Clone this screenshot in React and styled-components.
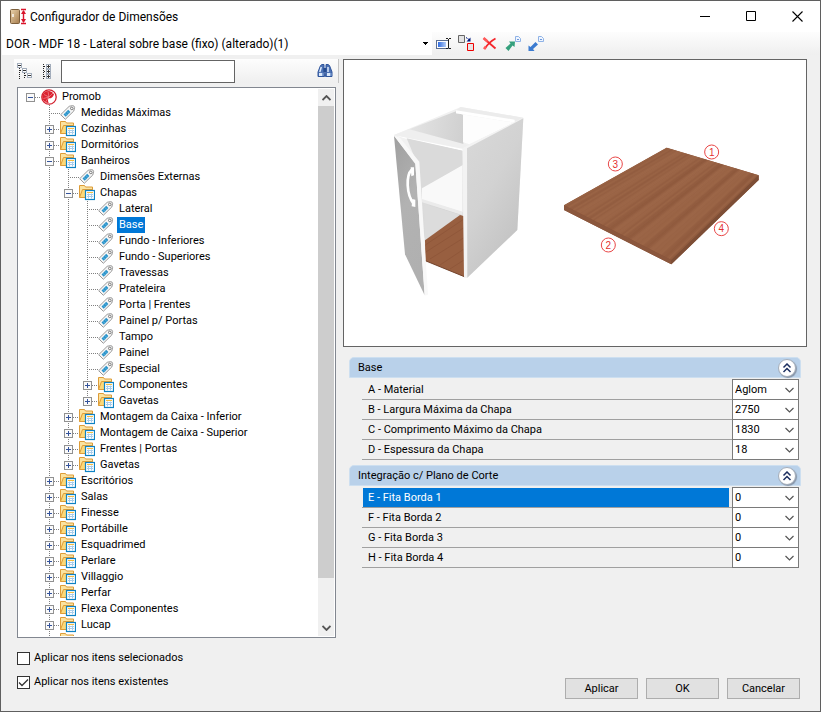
import React, { Fragment, useState } from "react";
import styled, { createGlobalStyle } from "styled-components";

const leaf = (name) => ({ name, type: "tag" });
const folder = (name, children = [], open = false) => ({
  name,
  type: "folder",
  children,
  open,
});

const TREE = {
  name: "Promob",
  type: "root",
  open: true,
  children: [
    leaf("Medidas Máximas"),
    folder("Cozinhas"),
    folder("Dormitórios"),
    folder(
      "Banheiros",
      [
        leaf("Dimensões Externas"),
        folder(
          "Chapas",
          [
            leaf("Lateral"),
            leaf("Base"),
            leaf("Fundo - Inferiores"),
            leaf("Fundo - Superiores"),
            leaf("Travessas"),
            leaf("Prateleira"),
            leaf("Porta | Frentes"),
            leaf("Painel p/ Portas"),
            leaf("Tampo"),
            leaf("Painel"),
            leaf("Especial"),
            folder("Componentes"),
            folder("Gavetas"),
          ],
          true
        ),
        folder("Montagem da Caixa - Inferior"),
        folder("Montagem de Caixa - Superior"),
        folder("Frentes | Portas"),
        folder("Gavetas"),
      ],
      true
    ),
    folder("Escritórios"),
    folder("Salas"),
    folder("Finesse"),
    folder("Portábille"),
    folder("Esquadrimed"),
    folder("Perlare"),
    folder("Villaggio"),
    folder("Perfar"),
    folder("Flexa Componentes"),
    folder("Lucap"),
    folder(""),
  ],
};

const GROUPS = [
  {
    title: "Base",
    fields: [
      { name: "A - Material", value: "Aglom" },
      { name: "B - Largura Máxima da Chapa", value: "2750" },
      { name: "C - Comprimento Máximo da Chapa", value: "1830" },
      { name: "D - Espessura da Chapa", value: "18" },
    ],
  },
  {
    title: "Integração c/ Plano de Corte",
    fields: [
      { name: "E - Fita Borda 1", value: "0" },
      { name: "F - Fita Borda 2", value: "0" },
      { name: "G - Fita Borda 3", value: "0" },
      { name: "H - Fita Borda 4", value: "0" },
    ],
  },
];

// icons
const AppIcon = () => (
  <svg width="18" height="18" viewBox="0 0 18 18">
    <defs>
      <linearGradient id="door" x1="0" y1="0" x2="1" y2="1">
        <stop offset="0" stopColor="#ead3ac" />
        <stop offset="1" stopColor="#a67c4d" />
      </linearGradient>
    </defs>
    <rect x="1.5" y="1.500" width="9" height="14" rx="1" fill="url(#door)" stroke="#7d5f3c" />
    <path d="M4 6v3" stroke="#fff" strokeWidth="1.400" />
    <path d="M12 1.500h5M12 15.500h5M14.500 3v11" stroke="#d9152c" strokeWidth="1.400" />
    <path d="M14.500 2l2.500 4h-5zM14.500 15l2.500-4h-5z" fill="#d9152c" />
  </svg>
);

const RootIcon = () => (
  <svg width="16" height="16" viewBox="0 0 16 16">
    <circle cx="8" cy="8" r="7.200" fill="#fff" stroke="#d2202e" strokeWidth="1.300" />
    <path
      d="M8.200 2a6 6 0 1 0 -0.500 11.900C6.800 12.400 6.800 10.600 7.600 9.200C9.500 9.600 11.800 8.800 13 5.200A6 6 0 0 0 8.200 2z"
      fill="#dc2230"
    />
    <path
      d="M8 8L3 5.500M8 8L2.500 9.500M7.500 8.500L4.500 13M8 8L7 2.500M8 8L12 4"
      stroke="#f3a0a6"
      strokeWidth="0.600"
    />
  </svg>
);

const FolderIcon = () => (
  <svg width="16" height="16" viewBox="0 0 16 16">
    <path d="M0.500 12.500v-12h5l1 1.500h7v3" fill="#fbe3a0" stroke="#dd9c38" />
    <path d="M0.500 12.500l3-8h10v8z" fill="#fcd978" stroke="#dd9c38" />
    <rect x="6.500" y="5.500" width="9" height="9" fill="#fff" stroke="#0f83c4" strokeWidth="1.200" />
    <path d="M8 7.500h6" stroke="#f5bd3f" />
    <path d="M8 9.500h6M8 11.500h6M9.500 8.500v5M12.500 8.500v5" stroke="#a9cdea" />
  </svg>
);

const TagIcon = () => (
  <svg width="16" height="16" viewBox="0 0 16 16">
    <path
      d="M0.700 9.700L9.200 1.300L12.600 0.600Q14.600 0.800 14.600 2.600L13.800 6L5.300 14.300Z"
      fill="#f6f6f6"
      stroke="#999"
    />
    <path d="M3.500 9.500L8.200 4.800L10.400 7L5.700 11.700Z" fill="#2a93ca" />
    <path d="M4.800 8.200L7 10.400M6.700 6.300L8.900 8.500" stroke="#7dc3e6" strokeWidth="0.700" />
    <circle cx="11.800" cy="3.400" r="1.300" fill="#fff" stroke="#777" />
  </svg>
);

const CollapseAllIcon = () => (
  <svg width="17" height="17" viewBox="0 0 17 17" shapeRendering="crispEdges">
    <path d="M2.500 5v11M7.500 10v6M3 7.500h3M8 12.500h3" fill="none" stroke="#222" strokeDasharray="1 1" />
    <path d="M0.500 0.500h4v4h-4zM5.500 5.500h4v4h-4zM10.500 10.500h4v4h-4z" fill="#fff" stroke="#a3adbb" />
    <path d="M1 2.500h3M6 7.500h3M11 12.500h3" stroke="#333" />
  </svg>
);

const ExpandAllIcon = () => (
  <svg width="9" height="17" viewBox="0 0 9 17" shapeRendering="crispEdges">
    <path d="M0.500 1v15M1 3.500h3M1 8.500h3M1 13.500h3" fill="none" stroke="#222" strokeDasharray="1 1" />
    <path d="M3.500 1.500h4v4h-4zM3.500 6.500h4v4h-4zM3.500 11.500h4v4h-4z" fill="#fff" stroke="#a3adbb" />
    <path d="M4 3.500h3M5.500 2v3M4 8.500h3M5.500 7v3M4 13.500h3M5.500 12v3" stroke="#333" />
  </svg>
);

const BinocularsIcon = () => (
  <svg width="16" height="16" viewBox="0 0 16 16">
    <path
      d="M3.500 2.500l1.500-1h2v4l.5 8h-6.500v-4.500zM12.500 2.500l-1.500-1h-2v4l-.5 8h6.500v-4.500z"
      fill="#4e73b5"
      stroke="#2f559c"
    />
    <path d="M6.500 5h3v4h-3z" fill="#274c90" />
    <path d="M4.300 4L2.800 9M11 4v5" stroke="#dce9fb" strokeWidth="1.500" />
    <path d="M2 10h3v3H2zM10 10h3v3h-3z" fill="#dbe8fa" />
    <path d="M5 10h1.500v3H5zM13 10h1.500v3H13z" fill="#7f9fd2" />
  </svg>
);

const RenameIcon = () => (
  <svg width="16" height="16" viewBox="0 0 16 16">
    <defs>
      <linearGradient id="field">
        <stop offset="0" stopColor="#2f6be0" />
        <stop offset="1" stopColor="#b5cff9" />
      </linearGradient>
    </defs>
    <rect x="0.500" y="4.500" width="12" height="8" fill="#fff" stroke="#5c6f91" />
    <rect x="2" y="6" width="8" height="5" fill="url(#field)" />
    <path d="M10 2.500h2M13 2.500h2M12.500 3v9M10 12.500h2M13 12.500h2" stroke="#222" />
  </svg>
);

const ReplaceIcon = () => (
  <svg width="17" height="17" viewBox="0 0 17 17">
    <path d="M0.500 0.500h6v7h-6z" fill="#e4e4e4" stroke="#666" />
    <path d="M9.500 8.500h6v7h-6z" fill="#e9e4e4" stroke="#e00" />
    <path d="M8 2.500l3 2" stroke="#001a80" strokeDasharray="1.500 0.500" />
    <path d="M12.500 2.500v4H8.500z" fill="#001a80" />
  </svg>
);

const DeleteIcon = () => (
  <svg width="16" height="16" viewBox="0 0 16 16">
    <path d="M2 2.500L13.500 12.500" fill="none" stroke="#f4262b" strokeWidth="1.800" />
    <path d="M13.500 2.500C9 5 5 9 2.500 13" fill="none" stroke="#f4262b" strokeWidth="1.800" />
    <path d="M1.500 2l4 3.500M2 13l2-2.500" stroke="#ff5a5a" strokeWidth="2.600" />
  </svg>
);

const TransferIcon = ({ color, down }) => (
  <svg width="16" height="16" viewBox="0 0 16 16">
    <path d="M10.500 0.500h3l2 2v3h-5z" fill="#eef5ff" stroke="#8fb2e6" />
    <path d="M12 3.500h2" stroke="#6f98d8" />
    {down ? (
      <path d="M0.500 15L0.500 9.500L2.500 11L7.500 6L10 8.500L5 13L6.500 15Z" fill={color} />
    ) : (
      <path d="M10 5.500L9.500 11L7.500 9.500L3.500 15L0.500 12L5.500 7.500L4 5.500Z" fill={color} />
    )}
  </svg>
);

const Chevron = ({ up, bold }) => (
  <svg width="9" height="6" viewBox="0 0 9 6">
    <path
      d={up ? "M0.500 5L4.500 1L8.500 5" : "M0.500 1L4.500 5L8.500 1"}
      fill="none"
      stroke="#555"
      strokeWidth={bold ? 1.8 : 1.2}
    />
  </svg>
);

// wood grain runs along the long edges of the board
const lerp = (a, b, t) => [a[0] + (b[0] - a[0]) * t, a[1] + (b[1] - a[1]) * t];
const GRAIN = Array.from({ length: 64 }, (_, i) => {
  const t = (i + 0.5) / 64;
  return {
    from: lerp([42, 226], [364, 390], t),
    to: lerp([350, 53], [626, 136], t),
    dark: Math.sin(i * 0.55) + Math.sin(i * 2.3) > 0,
    opacity: 0.04 + ((i * 37) % 11) / 90,
  };
});
const MARKS = [
  { text: "1", x: 485, y: 66 },
  { text: "2", x: 175, y: 345 },
  { text: "3", x: 196, y: 102 },
  { text: "4", x: 514, y: 296 },
];

const Cabinet = () => (
  <g transform="translate(36 35) scale(0.33333)">
    <defs>
      <linearGradient id="side" x1="0" y1="0" x2="0.6" y2="1">
        <stop offset="0" stopColor="#d9d9d9" />
        <stop offset="0.5" stopColor="#d2d2d2" />
        <stop offset="1" stopColor="#c2c2c2" />
      </linearGradient>
      <linearGradient id="front" x1="0" y1="0" x2="0.3" y2="1">
        <stop offset="0" stopColor="#9f9f9f" />
        <stop offset="0.5" stopColor="#b2b2b2" />
        <stop offset="1" stopColor="#b0b0b0" />
      </linearGradient>
      <linearGradient id="inner" x1="0" y1="0" x2="1" y2="0.3">
        <stop offset="0" stopColor="#e6e6e6" />
        <stop offset="1" stopColor="#cfcfcf" />
      </linearGradient>
    </defs>
    <path d="M42 120L242 36L430 68L412 405L260 549L134 500Z" fill="#f1f1f1" />
    <path d="M80 106L230 48L250 60V360L130 430L110 190Z" fill="url(#inner)" />
    <path d="M249 57L404 82L268 148L249 142Z" fill="#fdfdfd" />
    <path d="M242 36L430 68L404 83L228 55V46Z" fill="#ececec" />
    <path d="M228 46L404 74V83L228 55Z" fill="#fff" />
    <path d="M42 120L88 103L262 150L250 168L60 124Z" fill="#efefef" />
    <path d="M50 122L250 162V168L78 131Z" fill="#fff" />
    <path d="M80 130L248 167V210L125 278L105 190Z" fill="#dadada" />
    <path d="M126 280L248 210V352L126 314Z" fill="#f9f9f9" />
    <path d="M126 312L248 350V361L126 322Z" fill="#ebebeb" />
    <path d="M132 326L246 361L134 440Z" fill="#dcdcdc" />
    <path d="M135 436L240 360L253 364V545L136 497Z" fill="#985f40" />
    <path
      d="M136 450L252 372M136 472L252 398M150 492L252 428M180 510L252 462M210 522L252 495"
      stroke="#7d452c"
      strokeWidth="3"
      opacity="0.3"
    />
    <path d="M136 497L253 545" stroke="#75442c" strokeWidth="3" />
    <path d="M247 160L430 68L425 78L262 165V549L252 545Z" fill="#f3f3f3" />
    <path d="M261 160L430 70L412 405L262 548Z" fill="url(#side)" />
    <path d="M42 122L106 205L134 601L75 478Z" fill="url(#front)" />
    <path d="M42 122L60 128L118 200L144 599L134 602L106 207Z" fill="#f8f8f8" />
    <path d="M95 224C78 240 78 298 102 328" fill="none" stroke="#fff" strokeWidth="8" />
    <path d="M92 217h10v24l-8 3zM97 312l9 2v22l-11-2z" fill="#fff" />
  </g>
);

const Board = () => (
  <g transform="translate(206 70) scale(0.33333)">
    <path d="M42 226L350 53L626 136V150L364 403L42 240Z" fill="#8a5338" />
    <path d="M42 226L350 53L626 136L364 390Z" fill="#986244" />
    {GRAIN.map((line, index) => (
      <path
        key={index}
        d={`M${line.from.join(" ")}L${line.to.join(" ")}`}
        stroke={line.dark ? "#6f3d26" : "#b07a58"}
        strokeWidth="6"
        opacity={line.opacity}
      />
    ))}
    <path d="M42 226L364 390V403L42 240Z" fill="#8b573d" />
    <path d="M364 390L626 136V150L364 403Z" fill="#7d4e36" />
    {MARKS.map((mark) => (
      <g key={mark.text}>
        <circle cx={mark.x} cy={mark.y} r="21" fill="#fff" stroke="#e84545" strokeWidth="3" />
        <MarkText x={mark.x} y={mark.y + 11}>
          {mark.text}
        </MarkText>
      </g>
    ))}
  </g>
);

const ICONS = { root: RootIcon, folder: FolderIcon, tag: TagIcon };

const TreeNode = ({ node, selected, onSelect }) => {
  const [open, setOpen] = useState(Boolean(node.open));
  const Icon = ICONS[node.type];
  return (
    <TreeItem>
      <TreeRow>
        {node.children ? (
          <Toggle type="button" onClick={() => setOpen(!open)}>
            <svg width="9" height="9" viewBox="0 0 9 9" shapeRendering="crispEdges">
              <rect x="0.500" y="0.500" width="8" height="8" fill="#fafafa" stroke="#919191" />
              <path d={open ? "M2 4.500h5" : "M2 4.500h5M4.500 2v5"} stroke="#34539b" />
            </svg>
          </Toggle>
        ) : (
          <NoToggle />
        )}
        <Branch $wide={!node.children} />
        <Icon />
        {node.name && (
          <TreeLabel type="button" $selected={selected === node.name} onClick={() => onSelect(node.name)}>
            {node.name}
          </TreeLabel>
        )}
      </TreeRow>
      {open && node.children && (
        <TreeList $nested>
          {node.children.map((child, index) => (
            <TreeNode key={index} node={child} selected={selected} onSelect={onSelect} />
          ))}
        </TreeList>
      )}
    </TreeItem>
  );
};

const FieldGroup = ({ group, current, onFocus }) => (
  <Fragment>
    <GroupHeader>
      <GroupTitle>{group.title}</GroupTitle>
      <GroupButton type="button" aria-label={group.title}>
        <svg width="10" height="10" viewBox="0 0 10 10">
          <path d="M1.500 4.500L5 1L8.500 4.500M1.500 9L5 5.500L8.500 9" fill="none" stroke="#1d2f60" strokeWidth="1.500" />
        </svg>
      </GroupButton>
    </GroupHeader>
    <FieldList>
      {group.fields.map((field) => (
        <Field key={field.name}>
          <FieldLabel htmlFor={field.name[0]} $current={current === field.name}>
            {field.name}
          </FieldLabel>
          <SelectBox>
            <FieldSelect id={field.name[0]} onFocus={() => onFocus(field.name)}>
              <option>{field.value}</option>
            </FieldSelect>
            <Chevron />
          </SelectBox>
        </Field>
      ))}
    </FieldList>
  </Fragment>
);

const App = () => {
  const [selected, setSelected] = useState("Base");
  const [current, setCurrent] = useState("E - Fita Borda 1");
  return (
    <Window>
      <GlobalStyle />
      <TitleBar>
        <AppIcon />
        <Title>Configurador de Dimensões</Title>
        <WindowButton type="button" aria-label="Minimizar">
          <svg width="11" height="11" viewBox="0 0 11 11">
            <path d="M0 5.500h10" stroke="#000" />
          </svg>
        </WindowButton>
        <WindowButton type="button" aria-label="Maximizar">
          <svg width="11" height="11" viewBox="0 0 11 11">
            <path d="M0.500 0.500h9v9h-9z" fill="none" stroke="#000" />
          </svg>
        </WindowButton>
        <WindowButton type="button" aria-label="Fechar">
          <svg width="11" height="11" viewBox="0 0 11 11">
            <path d="M0.500 0.500l10 10M10.500 0.500l-10 10" stroke="#000" strokeWidth="1.100" />
          </svg>
        </WindowButton>
      </TitleBar>
      <ToolBar>
        <PresetBox>
          <PresetSelect aria-label="Modelo">
            <option>DOR - MDF 18 - Lateral sobre base (fixo) (alterado)(1)</option>
          </PresetSelect>
          <svg width="5" height="3" viewBox="0 0 5 3" shapeRendering="crispEdges">
            <path d="M0 0h5L2.500 3z" fill="#000" />
          </svg>
        </PresetBox>
        <ToolButton type="button" aria-label="Renomear">
          <RenameIcon />
        </ToolButton>
        <ToolButton type="button" aria-label="Substituir">
          <ReplaceIcon />
        </ToolButton>
        <ToolButton type="button" aria-label="Excluir">
          <DeleteIcon />
        </ToolButton>
        <ToolButton type="button" aria-label="Exportar">
          <TransferIcon color="#34a07c" />
        </ToolButton>
        <ToolButton type="button" aria-label="Importar">
          <TransferIcon color="#3b7bd0" down />
        </ToolButton>
      </ToolBar>
      <Content>
        <LeftColumn>
          <SearchBar>
            <PlainButton type="button" aria-label="Recolher">
              <CollapseAllIcon />
            </PlainButton>
            <PlainButton type="button" aria-label="Expandir">
              <ExpandAllIcon />
            </PlainButton>
            <SearchInput type="text" aria-label="Procurar" />
            <SearchButton type="button" aria-label="Procurar">
              <BinocularsIcon />
            </SearchButton>
          </SearchBar>
          <TreePanel>
            <TreeView>
              <TreeList>
                <TreeNode node={TREE} selected={selected} onSelect={setSelected} />
              </TreeList>
            </TreeView>
            <ScrollBar>
              <ScrollArrow type="button" aria-label="Subir">
                <Chevron up bold />
              </ScrollArrow>
              <ScrollTrack>
                <ScrollThumb />
              </ScrollTrack>
              <ScrollArrow type="button" aria-label="Descer">
                <Chevron bold />
              </ScrollArrow>
            </ScrollBar>
          </TreePanel>
        </LeftColumn>
        <RightColumn>
          <Picture>
            <svg viewBox="0 0 462 286">
              <Cabinet />
              <Board />
            </svg>
          </Picture>
          <Groups>
            {GROUPS.map((group) => (
              <FieldGroup key={group.title} group={group} current={current} onFocus={setCurrent} />
            ))}
          </Groups>
        </RightColumn>
      </Content>
      <Footer>
        <Checks>
          <CheckLabel>
            <CheckBox type="checkbox" />
            Aplicar nos itens selecionados
          </CheckLabel>
          <CheckLabel>
            <CheckBox type="checkbox" defaultChecked />
            Aplicar nos itens existentes
          </CheckLabel>
        </Checks>
        <Actions>
          <Button type="button">Aplicar</Button>
          <Button type="button">OK</Button>
          <Button type="button">Cancelar</Button>
        </Actions>
      </Footer>
    </Window>
  );
};

const GlobalStyle = createGlobalStyle`
  * {
    box-sizing: border-box;
  }
  body {
    margin: 0;
    color: #000;
    font-family: Roboto, "Liberation Sans", Arial, sans-serif;
    font-size: 11px;
    line-height: 16px;
  }
  button, input, select {
    margin: 0;
    padding: 0;
    color: inherit;
    font: inherit;
  }
  svg {
    display: block;
    flex: none;
  }
`;

const Window = styled.div`
  display: flex;
  flex-direction: column;
  height: 100vh;
  background: #f0f0f0;
  border: 1px solid #5f5f5f;
`;

const TitleBar = styled.header`
  display: flex;
  align-items: center;
  height: 31px;
  padding-left: 8px;
  background: #fff;
`;

const Title = styled.h1`
  flex: 1;
  margin: 0 0 0 3px;
  font-size: 12px;
  font-weight: 400;
`;

const PlainButton = styled.button`
  display: flex;
  align-items: center;
  justify-content: center;
  background: none;
  border: 0;
`;

const WindowButton = styled(PlainButton)`
  width: 46px;
  height: 29px;
`;

const ToolBar = styled.div`
  display: flex;
  height: 23px;
  padding-left: 1px;
  background: linear-gradient(#fdfdfd, #efefef);
`;

const PresetBox = styled.div`
  display: grid;
  flex: 0 1 430px;
  align-items: center;
  background: #fff;
  > * {
    grid-area: 1 / 1;
  }
  > svg {
    justify-self: end;
    margin-right: 4px;
    pointer-events: none;
  }
`;

const BareSelect = styled.select`
  width: 100%;
  appearance: none;
  background: none;
  border: 0;
  border-radius: 0;
`;

const PresetSelect = styled(BareSelect)`
  height: 23px;
  padding-left: 4px;
  font-size: 12px;
`;

const ToolButton = styled(PlainButton)`
  width: 23px;
`;

const Content = styled.main`
  display: flex;
  flex: 1;
  gap: 4px;
  min-height: 0;
  padding: 4px 13px 0;
`;

const LeftColumn = styled.section`
  display: flex;
  flex: 0 0 325px;
  flex-direction: column;
  gap: 4px;
`;

const SearchBar = styled.div`
  display: flex;
  gap: 9px;
  align-items: center;
  height: 24px;
  padding: 0 5px 0 3px;
  background: linear-gradient(#fdfdfd, #efefef);
  border-right: 1px solid #c4c4c4;
`;

const SearchInput = styled.input`
  width: 174px;
  height: 23px;
  padding: 0 4px;
  background: #fff;
  border: 1px solid #646464;
`;

const SearchButton = styled(PlainButton)`
  margin-left: auto;
`;

const TreePanel = styled.div`
  display: flex;
  flex: 1;
  min-height: 0;
  margin: 0 3px;
  padding: 1px;
  background: #fff;
  border: 1px solid #828790;
`;

const TreeView = styled.nav`
  flex: 1;
  overflow: hidden;
`;

const dots = "repeating-linear-gradient(#808080 0 1px, transparent 1px 2px)";
const dotsAcross = "repeating-linear-gradient(90deg, #808080 0 1px, transparent 1px 2px)";

const TreeList = styled.ul`
  margin: 0;
  padding: 0 0 0 ${(props) => (props.$nested ? 19 : 2)}px;
  list-style: none;
`;

const TreeItem = styled.li`
  ${TreeList} ${TreeList} > & {
    background: ${dots} 9px 0 / 1px 100% no-repeat;
  }
  ${TreeList} ${TreeList} > &:last-child {
    background-size: 1px 8px;
  }
`;

const TreeRow = styled.div`
  display: flex;
  align-items: center;
  height: 16px;
`;

const Toggle = styled(PlainButton)`
  flex: none;
  width: 9px;
  height: 9px;
  margin-left: 5px;
`;

const NoToggle = styled.span`
  width: 9px;
`;

const Branch = styled.span`
  width: ${(props) => (props.$wide ? 11 : 6)}px;
  height: 1px;
  background: ${dotsAcross};
`;

const TreeLabel = styled.button`
  height: 16px;
  margin-left: 3px;
  padding: 0 2px;
  color: ${(props) => (props.$selected ? "#fff" : "#000")};
  white-space: nowrap;
  background: ${(props) => (props.$selected ? "#0078d7" : "none")};
  border: 0;
`;

const ScrollBar = styled.div`
  display: flex;
  flex: 0 0 16px;
  flex-direction: column;
  background: #f0f0f0;
`;

const ScrollArrow = styled(PlainButton)`
  height: 17px;
`;

const ScrollTrack = styled.div`
  flex: 1;
`;

const ScrollThumb = styled.div`
  height: 92%;
  background: #cdcdcd;
`;

const RightColumn = styled.section`
  flex: 1;
  min-width: 0;
`;

const Picture = styled.div`
  background: #fff;
  border: 1px solid #646464;
  > svg {
    width: 100%;
    height: auto;
  }
`;

const MarkText = styled.text`
  fill: #e32f2f;
  font-family: "Liberation Sans", Arial, sans-serif;
  font-size: 30px;
  text-anchor: middle;
`;

const Groups = styled.form`
  padding: 10px 6px 0;
`;

const GroupHeader = styled.div`
  display: flex;
  align-items: center;
  justify-content: space-between;
  height: 21px;
  padding: 0 4px 0 8px;
  background: #b9d1ea;
  border: 1px solid #cddff0;
  border-radius: 5px 5px 0 0;
`;

const GroupTitle = styled.h2`
  margin: 0;
  font-size: 11px;
  font-weight: 400;
`;

const GroupButton = styled(PlainButton)`
  width: 18px;
  height: 18px;
  background: #fff;
  border: 1px solid #a4adb9;
  border-radius: 50%;
  box-shadow: 1px 1px 1px #8795a8;
`;

const FieldList = styled.div`
  margin: 2px 2px 5px 13px;
`;

const Field = styled.div`
  display: flex;
  height: 20px;
  border-bottom: 1px solid #a0a0a0;
`;

const FieldLabel = styled.label`
  flex: 1;
  margin: 0 3px 0 1px;
  padding-left: 5px;
  color: ${(props) => (props.$current ? "#fff" : "#000")};
  line-height: 20px;
  background: ${(props) => (props.$current ? "#0078d7" : "none")};
`;

const SelectBox = styled.div`
  display: grid;
  align-items: center;
  width: 67px;
  height: 21px;
  margin-top: -1px;
  background: #fff;
  border: 1px solid #7a7a7a;
  > * {
    grid-area: 1 / 1;
  }
  > svg {
    justify-self: end;
    margin-right: 4px;
    pointer-events: none;
  }
`;

const FieldSelect = styled(BareSelect)`
  height: 19px;
  padding-left: 2px;
`;

const Footer = styled.footer`
  display: flex;
  align-items: flex-end;
  justify-content: space-between;
  padding: 12px 20px 12px 16px;
`;

const Checks = styled.div`
  display: flex;
  flex-direction: column;
  gap: 8px;
  padding-bottom: 9px;
`;

const CheckLabel = styled.label`
  display: flex;
  align-items: center;
  gap: 4px;
`;

const tick = `url("data:image/svg+xml,%3Csvg xmlns='http://www.w3.org/2000/svg' viewBox='0 0 11 11'%3E%3Cpath d='M1 5.500l3 3L10 2.500' fill='none' stroke='%23333' stroke-width='1.300'/%3E%3C/svg%3E")`;

const CheckBox = styled.input`
  width: 13px;
  height: 13px;
  appearance: none;
  background: #fff;
  border: 1px solid #333;
  &:checked {
    background-image: ${tick};
  }
`;

const Actions = styled.div`
  display: flex;
  gap: 8px;
`;

const Button = styled.button`
  width: 73px;
  height: 21px;
  background: #e1e1e1;
  border: 1px solid #adadad;
`;

export default App;
